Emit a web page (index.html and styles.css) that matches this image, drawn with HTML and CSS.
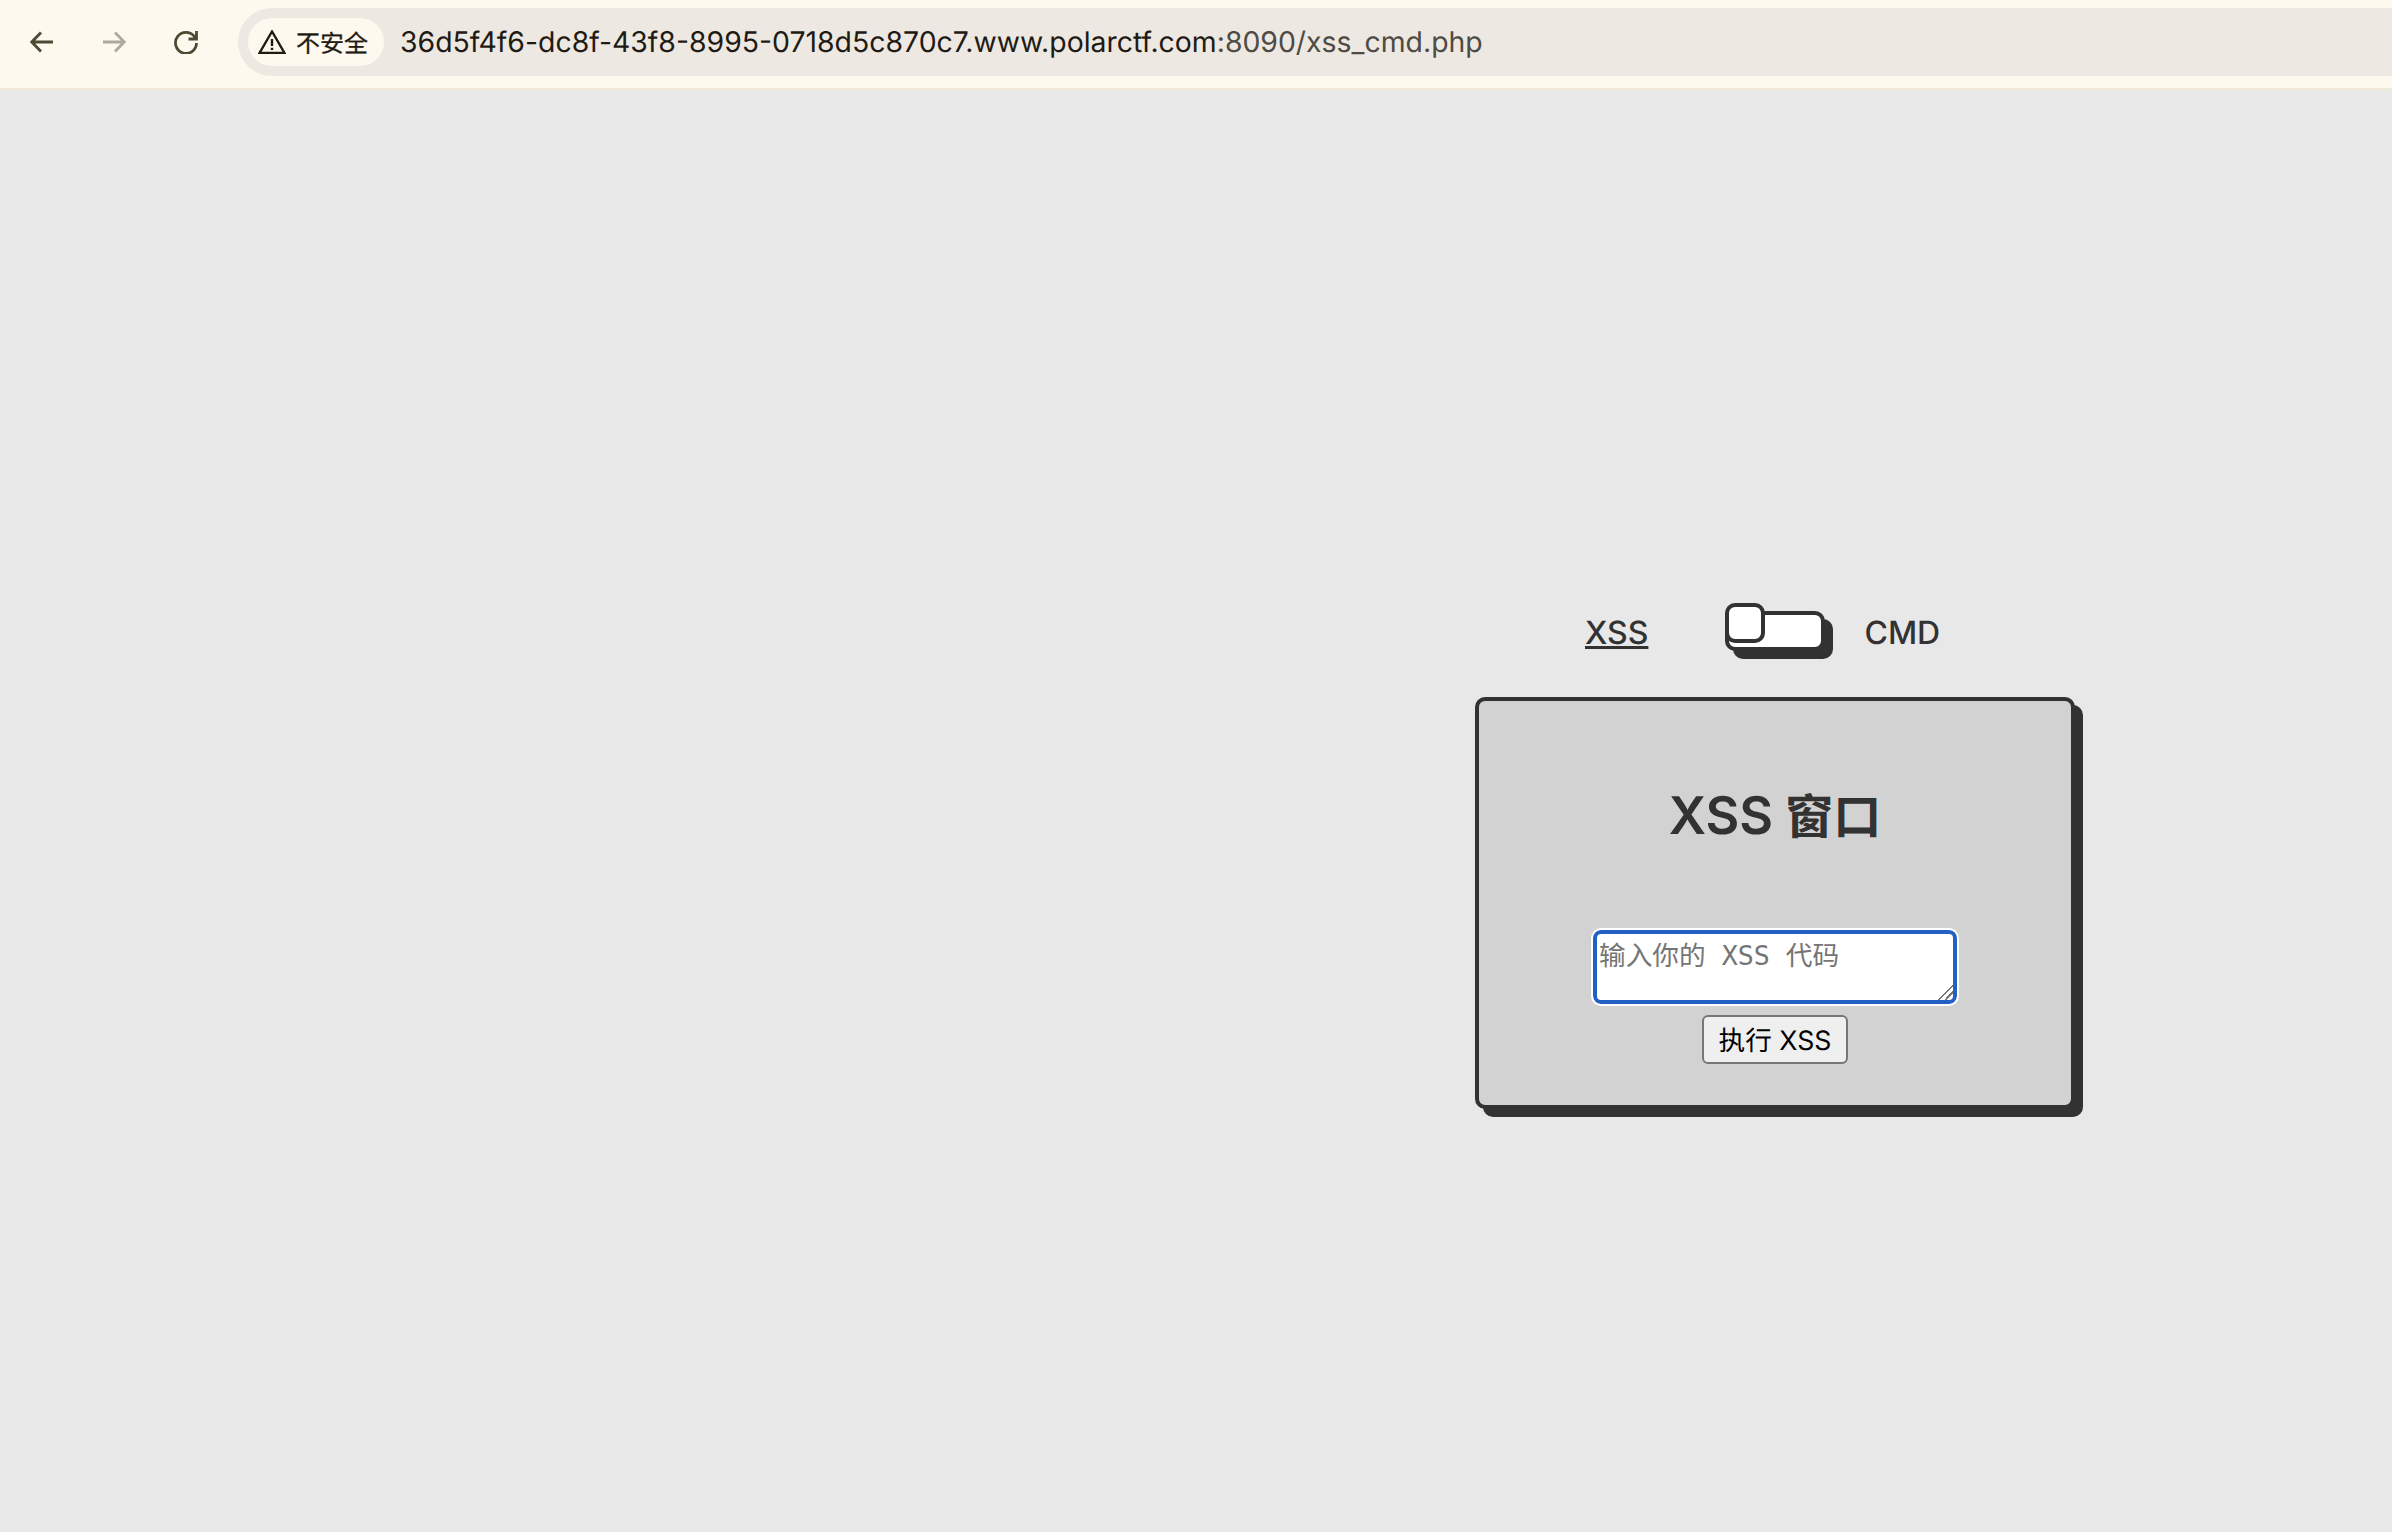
FILE: index.html
```html
<!DOCTYPE html>
<html lang="zh-CN">
<head>
<meta charset="utf-8">
<title>XSS CMD</title>
<link rel="stylesheet" href="styles.css">
</head>
<body>
<header class="toolbar">
  <div class="nav">
    <svg class="icon" viewBox="0 0 24 24"><path class="dark" d="M23 12H2M11 2.500 1.800 12 11 21.500"/></svg>
    <svg class="icon" viewBox="0 0 24 24"><path class="muted" d="M1 12H22M13 2.500 22.200 12 13 21.500"/></svg>
    <svg class="icon" viewBox="0 0 24 24"><path class="dark" d="M21 7.500A10.500 10.500 0 1 0 22.500 13M22.500 1V9H14.500"/></svg>
  </div>
  <div class="omnibox">
    <div class="chip">
      <svg class="warn" viewBox="0 0 28 24"><path d="M14 1.500 1.500 23H26.500Z"/><path d="M14 9V16M14 17.800V20"/></svg>
      <span class="chip-text">不安全</span>
    </div>
    <div class="url">36d5f4f6-dc8f-43f8-8995-0718d5c870c7.www.polarctf.com<span class="path">:8090/xss_cmd.php</span></div>
  </div>
</header>
<main class="page">
  <div class="column">
    <div class="switch-row">
      <span class="label active">XSS</span>
      <div class="switch"><div class="knob"></div></div>
      <span class="label">CMD</span>
    </div>
    <section class="card">
      <h2 class="title"><span class="title-latin">XSS</span> 窗口</h2>
      <textarea class="code" placeholder="输入你的 XSS 代码"></textarea>
      <button class="run" type="button">执行 XSS</button>
    </section>
  </div>
</main>
</body>
</html>
```
FILE: styles.css
```css
* { box-sizing: border-box; }
html, body { margin: 0; height: 100%; }
body {
  background: #e8e8e8;
  font-family: "Inter", "Noto Sans CJK SC", sans-serif;
  color: #323232;
  overflow: hidden;
  text-rendering: geometricPrecision;
}
.toolbar {
  height: 90px;
  background: #fef9ee;
  border-bottom: 2px solid #efe8d8;
  display: flex;
  align-items: center;
  padding-left: 30px;
}
.nav { display: flex; gap: 48px; width: 208px; margin-bottom: 4px; }
.icon { width: 24px; height: 24px; fill: none; stroke-width: 2.800; }
.dark { stroke: #4e4932; }
.muted { stroke: #aeaaa0; }
.omnibox {
  flex: 1;
  height: 68px;
  margin-bottom: 4px;
  background: #ede8e2;
  border-radius: 34px 0 0 34px;
  display: flex;
  align-items: center;
  padding-left: 10px;
}
.chip {
  width: 136px;
  height: 48px;
  border-radius: 24px;
  background: #fef9ee;
  display: flex;
  align-items: center;
  padding-left: 10px;
  gap: 10px;
  font-size: 24px;
  color: #1f1b14;
}
.chip-text { padding-bottom: 2px; -webkit-text-stroke: 0.3px #1f1b14; }
.warn { width: 28px; height: 24px; fill: none; stroke: #1f1b14; stroke-width: 2.400; }
.url {
  margin-left: 16px;
  padding-bottom: 2px;
  font-size: 28.4px;
  color: #1f1b14;
  white-space: nowrap;
}
.path { color: #4e4a44; }
.page { padding: 513px 0 0 1475px; }
.column { width: 600px; }
.switch-row {
  display: flex;
  align-items: flex-start;
  padding-left: 110px;
  height: 60px;
}
.label { font-size: 32px; font-weight: 500; line-height: 60px; }
.active { text-decoration: underline; margin-right: 77px; }
.switch {
  width: 100px;
  height: 40px;
  margin: 8px 39px 0 0;
  background: #fff;
  border: 4px solid #323232;
  border-radius: 10px;
  box-shadow: 8px 8px 0 #323232;
  display: flex;
}
.knob {
  width: 40px;
  height: 40px;
  margin: -12px 0 0 -4px;
  flex: none;
  background: #fff;
  border: 4px solid #323232;
  border-radius: 10px;
}
.card {
  margin-top: 34px;
  height: 412px;
  background: #d2d2d2;
  border: 4px solid #323232;
  border-radius: 10px;
  box-shadow: 8px 8px 0 #323232;
  display: flex;
  flex-direction: column;
  align-items: center;
}
.title {
  margin: 83px 0 0;
  font-size: 48px;
  font-weight: 600;
  line-height: 64px;
}
.title-latin { font-size: 52px; }
.code {
  display: block;
  width: 364px;
  height: 74px;
  margin-top: 81px;
  padding: 0 2px;
  border: 4px solid #2260c4;
  border-radius: 8px;
  outline: 2px solid #fff;
  background: #fff;
  font-family: "DejaVu Sans Mono", "Noto Sans CJK SC", monospace;
  font-size: 26.667px;
}
.code::placeholder { color: #757575; }
.code::-webkit-resizer {
  background: linear-gradient(135deg, transparent 48%, #777 48%, #777 56%, #fff 56%, #fff 70%, #777 70%, #777 78%, transparent 78%);
}
.run {
  width: 146px;
  height: 49px;
  margin-top: 11px;
  padding: 0 0 2px;
  background: #efefef;
  border: 2px solid #767676;
  border-radius: 6px;
  color: #000;
  font-family: "Inter", "Noto Sans CJK SC", sans-serif;
  font-size: 26.667px;
  text-rendering: geometricPrecision;
}
```
